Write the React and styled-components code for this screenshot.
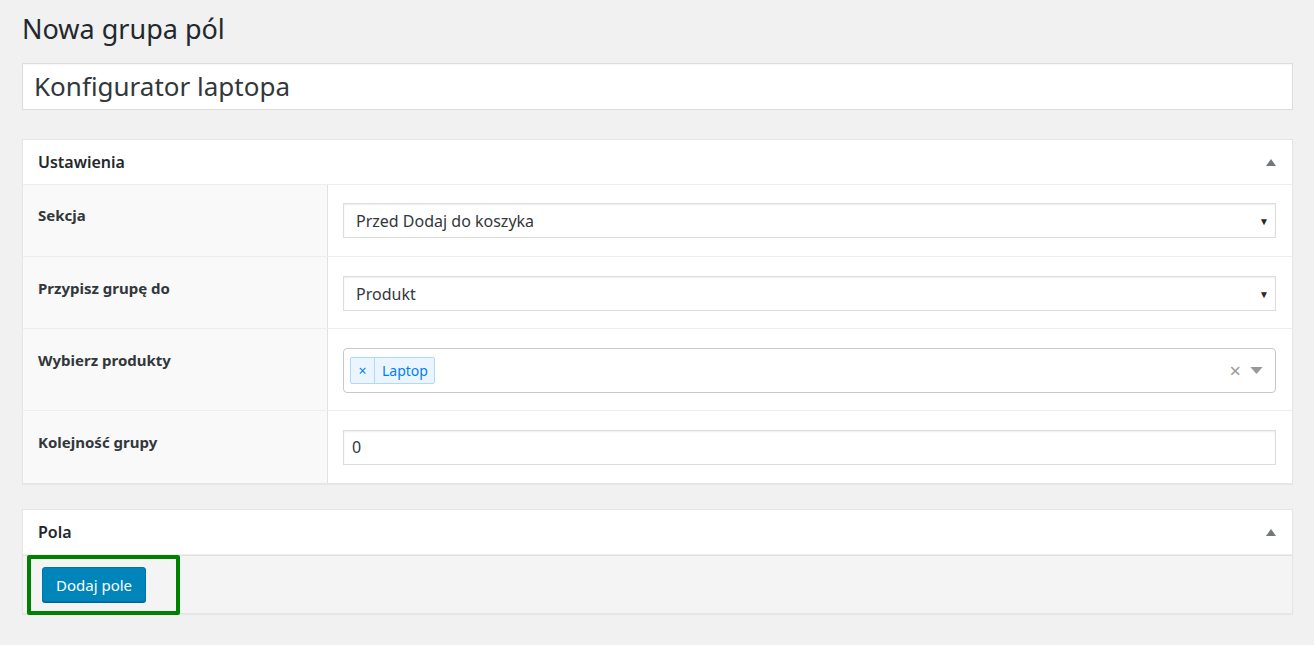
import React from "react";
import styled, { createGlobalStyle } from "styled-components";

const GlobalStyle = createGlobalStyle`
  html, body {
    margin: 0;
    padding: 0;
    background: #f1f1f1;
  }
  body {
    font-family: "Noto Sans", "Open Sans", sans-serif;
    color: #23282d;
  }
`;

const rows = [
  { label: "Sekcja", kind: "select", value: "Przed Dodaj do koszyka" },
  { label: "Przypisz grupę do", kind: "select", value: "Produkt" },
  { label: "Wybierz produkty", kind: "multi", tags: ["Laptop"] },
  { label: "Kolejność grupy", kind: "text", value: "0" },
];

function Field({ row }) {
  if (row.kind === "select") {
    return (
      <Select>
        <span>{row.value}</span>
        <Caret>▼</Caret>
      </Select>
    );
  }
  if (row.kind === "multi") {
    return (
      <Multi>
        {row.tags.map((tag) => (
          <Tag key={tag}>
            <TagRemove>×</TagRemove>
            <TagLabel>{tag}</TagLabel>
          </Tag>
        ))}
        <MultiControls>
          <Clear>×</Clear>
          <GrayCaret viewBox="0 0 14 8">
            <path d="M0 0h14L7 8z" fill="#999" />
          </GrayCaret>
        </MultiControls>
      </Multi>
    );
  }
  return <TextInput>{row.value}</TextInput>;
}

function Panel({ title, children }) {
  return (
    <Box>
      <BoxHeader>
        <span>{title}</span>
        <Toggle viewBox="0 0 10 7">
          <path d="M5 0l5 7H0z" fill="#72777c" />
        </Toggle>
      </BoxHeader>
      {children}
    </Box>
  );
}

export default function App() {
  return (
    <>
      <GlobalStyle />
      <Wrap>
        <Heading>Nowa grupa pól</Heading>
        <TitleInput>Konfigurator laptopa</TitleInput>

        <Panel title="Ustawienia">
          <Table>
            {rows.map((row) => (
              <Row key={row.label}>
                <Label>{row.label}</Label>
                <Cell>
                  <Field row={row} />
                </Cell>
              </Row>
            ))}
          </Table>
        </Panel>

        <Panel title="Pola">
          <FieldsBody>
            <Highlight />
            <Button>Dodaj pole</Button>
          </FieldsBody>
        </Panel>
      </Wrap>
    </>
  );
}

const Wrap = styled.div`
  padding: 0 21px 30px 22px;
`;

const Heading = styled.h1`
  margin: 0;
  padding: 11px 0 0;
  font-size: 27px;
  font-weight: 400;
  line-height: 36px;
  color: #23282d;
`;

const TitleInput = styled.div`
  margin-top: 16px;
  height: 45px;
  border: 1px solid #ddd;
  background: #fff;
  box-shadow: inset 0 1px 2px rgba(0, 0, 0, 0.04);
  padding: 0 11px;
  font-size: 26px;
  line-height: 45px;
  color: #32373c;
`;

const Box = styled.div`
  margin-top: 29px;
  background: #fff;
  border: 1px solid #e5e5e5;
  box-shadow: 0 1px 1px rgba(0, 0, 0, 0.04);

  & + & {
    margin-top: 25px;
  }
`;

const BoxHeader = styled.div`
  display: flex;
  align-items: center;
  justify-content: space-between;
  height: 44px;
  padding: 0 16px 0 15px;
  border-bottom: 1px solid #eee;
  font-size: 16px;
  font-weight: 600;
  color: #23282d;
`;

const Toggle = styled.svg`
  width: 10px;
  height: 7px;
`;

const Table = styled.div`
  display: flex;
  flex-direction: column;
`;

const Label = styled.div`
  background: #f9f9f9;
  border-right: 1px solid #e1e1e1;
  padding: 20px 15px 0;
  font-size: 15px;
  font-weight: 700;
  line-height: 20px;
  color: #32373c;
`;

const Cell = styled.div`
  padding: 18px 16px 18px 15px;
`;

const Row = styled.div`
  display: grid;
  grid-template-columns: 305px 1fr;

  & + & {
    border-top: 1px solid #eee;
  }
  & + & ${Label} {
    padding-top: 21px;
  }
  & + & ${Cell} {
    padding-top: 19px;
    padding-bottom: 17px;
  }
  &:last-child ${Cell} {
    padding-bottom: 18px;
  }
`;

const Select = styled.div`
  display: flex;
  align-items: center;
  justify-content: space-between;
  height: 33px;
  border: 1px solid #ddd;
  box-shadow: inset 0 1px 2px rgba(0, 0, 0, 0.07);
  padding: 0 6px 0 12px;
  font-size: 16px;
  color: #32373c;
`;

const Caret = styled.span`
  font-size: 10px;
  color: #23282d;
`;

const TextInput = styled.div`
  height: 33px;
  border: 1px solid #ddd;
  box-shadow: inset 0 1px 2px rgba(0, 0, 0, 0.07);
  padding: 0 8px;
  font-size: 16px;
  line-height: 33px;
  color: #32373c;
`;

const Multi = styled.div`
  display: flex;
  align-items: center;
  height: 43px;
  border: 1px solid #c8c8c8;
  border-radius: 4px;
  padding: 0 12px 0 6px;
`;

const Tag = styled.div`
  display: flex;
  align-items: stretch;
  height: 25px;
  background: #ebf5ff;
  border: 1px solid #b3d8ff;
  border-radius: 2px;
  color: #007eff;
  font-size: 14px;
`;

const TagRemove = styled.span`
  display: flex;
  align-items: center;
  justify-content: center;
  width: 23px;
  border-right: 1px solid #b3d8ff;
  font-size: 14px;
`;

const TagLabel = styled.span`
  display: flex;
  align-items: center;
  padding: 0 6px 0 7px;
`;

const MultiControls = styled.div`
  margin-left: auto;
  display: flex;
  align-items: center;
  gap: 9px;
`;

const Clear = styled.span`
  font-size: 20px;
  line-height: 1;
  color: #999;
`;

const GrayCaret = styled.svg`
  width: 13px;
  height: 7px;
`;

const FieldsBody = styled.div`
  position: relative;
  background: #f4f4f4;
  border-top: 1px solid #e1e1e1;
  padding: 11px 20px 11px 19px;
`;

const Highlight = styled.div`
  position: absolute;
  left: 4px;
  top: -1px;
  width: 145px;
  height: 52px;
  border: 4px solid #008000;
  border-radius: 2px;
  pointer-events: none;
`;

const Button = styled.button`
  height: 35px;
  padding: 0 13px;
  background: #0085ba;
  border: 1px solid #0073aa;
  border-radius: 3px;
  box-shadow: 0 1px 0 #006799;
  color: #fff;
  font-family: inherit;
  font-size: 15px;
  cursor: pointer;
`;
